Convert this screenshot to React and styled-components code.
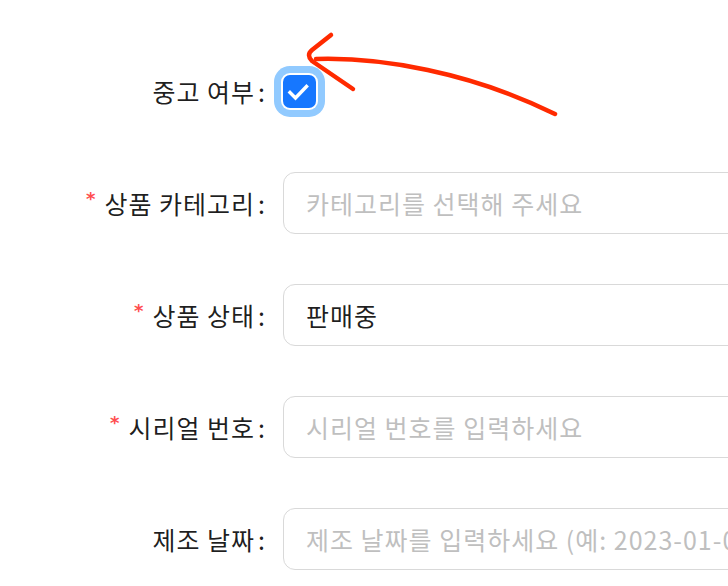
import React from "react";
import styled, { createGlobalStyle } from "styled-components";

const Global = createGlobalStyle`
  html, body { margin: 0; padding: 0; background: #fff; overflow: hidden; }
  body { font-family: "Noto Sans CJK KR", "Noto Sans", sans-serif; }
`;

const Page = styled.div`
  position: relative;
  width: 728px;
  height: 586px;
  overflow: hidden;
`;

const Form = styled.form`
  display: flex;
  flex-direction: column;
  gap: 50px;
  padding-top: 60px;
`;

const Row = styled.div`
  display: grid;
  grid-template-columns: 265px 620px;
  column-gap: 18px;
  align-items: center;
  height: 62px;
`;

const Label = styled.label`
  display: flex;
  justify-content: flex-end;
  align-items: center;
  font-size: 25px;
  letter-spacing: 1px;
  color: rgba(0, 0, 0, 0.88);
  white-space: nowrap;
`;

const Required = styled.span`
  color: #ff4d4f;
  font-size: 18px;
  line-height: 1;
  margin-right: 9px;
  position: relative;
  top: -4px;
  font-family: "DejaVu Sans", sans-serif;
  font-weight: bold;
  letter-spacing: 0;
`;

const Colon = styled.span`
  margin-left: 3px;
  letter-spacing: 0;
`;

const Input = styled.input`
  box-sizing: border-box;
  width: 100%;
  height: 62px;
  border: 1.5px solid #d9d9d9;
  border-radius: 12px;
  padding: 0 22px;
  font-family: inherit;
  font-size: 25px;
  letter-spacing: 1px;
  color: rgba(0, 0, 0, 0.88);
  background: #fff;
  outline: none;
  &::placeholder { color: #bfbfbf; }
`;

const CheckCell = styled.div`
  display: flex;
  align-items: center;
  height: 62px;
`;

const CheckBox = styled.span`
  display: inline-flex;
  width: 33px;
  height: 33px;
  border-radius: 7px;
  background: #1677ff;
  box-shadow: 0 0 0 2px #fff, 0 0 0 9px #91caff;
  align-items: center;
  justify-content: center;
`;

const Arrow = styled.svg`
  position: absolute;
  left: 0;
  top: 0;
  z-index: 2;
  pointer-events: none;
`;

function Field({ label, required, placeholder, value }) {
  return (
    <Row>
      <Label>
        {required && <Required>*</Required>}
        {label}
        <Colon>:</Colon>
      </Label>
      <Input placeholder={placeholder} defaultValue={value} readOnly={!!value} />
    </Row>
  );
}

export default function App() {
  return (
    <Page>
      <Global />
      <Form>
        <Row>
          <Label>
            중고 여부<Colon>:</Colon>
          </Label>
          <CheckCell>
            <CheckBox>
              <svg width="33" height="33" viewBox="0 0 33 33">
                <path d="M7 17.5 L12.5 23 L23.5 11.5" fill="none" stroke="#fff" strokeWidth="3.4" strokeLinecap="square" strokeLinejoin="miter" />
              </svg>
            </CheckBox>
          </CheckCell>
        </Row>
        <Field label="상품 카테고리" required placeholder="카테고리를 선택해 주세요" />
        <Field label="상품 상태" required value="판매중" />
        <Field label="시리얼 번호" required placeholder="시리얼 번호를 입력하세요" />
        <Field label="제조 날짜" placeholder="제조 날짜를 입력하세요 (예: 2023-01-01)" />
      </Form>
      <Arrow width="728" height="586" viewBox="0 0 728 586">
        <g fill="none" stroke="#ff2a00" strokeWidth="4.5" strokeLinecap="round" strokeLinejoin="round">
          <path d="M316 59 C380 57 470 72 555 114" />
          <path d="M331 35 L312 50 Q306 55 312 61 L353 89" />
        </g>
      </Arrow>
    </Page>
  );
}
